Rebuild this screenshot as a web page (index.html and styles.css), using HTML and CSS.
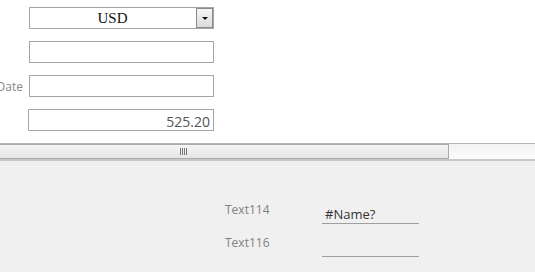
FILE: index.html
```html
<!DOCTYPE html>
<html lang="en">
<head>
    <meta charset="UTF-8">
    <meta name="viewport" content="width=device-width, initial-scale=1.0">
    <title>Invoice Form</title>
    <link rel="stylesheet" href="styles.css">
</head>
<body>
    <div class="form-top">
        <div class="row row-select">
            <label class="lbl"></label>
            <div class="select-box">
                <span class="select-val">USD</span>
                <span class="select-btn"><span class="arrow"></span></span>
            </div>
        </div>
        <div class="row">
            <label class="lbl"></label>
            <input type="text" class="field">
        </div>
        <div class="row">
            <label class="lbl">Date</label>
            <input type="text" class="field">
        </div>
        <div class="row row-total">
            <label class="lbl"></label>
            <input type="text" class="field field-num" value="525.20">
        </div>
    </div>

    <div class="hscroll">
        <div class="thumb"><span class="grip"><i></i><i></i><i></i><i></i></span></div>
        <div class="track"></div>
    </div>

    <div class="form-bottom">
        <div class="out-row">
            <span class="out-lbl">Text114</span>
            <span class="out-val">#Name?</span>
        </div>
        <div class="out-row">
            <span class="out-lbl">Text116</span>
            <span class="out-val"></span>
        </div>
    </div>
</body>
</html>
```

FILE: styles.css
```css
body { margin: 0; font-family: "Open Sans", "DejaVu Sans", sans-serif; background: #f0f0f0; overflow: hidden; }

.form-top { background: #fff; height: 143px; padding-top: 7px; box-sizing: border-box; }
.row { display: flex; align-items: center; height: 22px; margin-bottom: 12px; }
.row-total { margin-top: 4px; }
.lbl { width: 29px; padding-right: 6px; box-sizing: border-box; text-align: right; font-size: 12px; color: #888; white-space: nowrap; direction: rtl; overflow: visible; }
.row-total .lbl { width: 28px; }

.select-box { width: 185px; height: 22px; box-sizing: border-box; border: 1px solid #a5a5a5; display: flex; align-items: center; position: relative; background: #fff; }
.select-val { flex: 1; text-align: center; font-family: "Liberation Serif", serif; font-size: 15px; color: #111; padding-right: 18px; }
.select-btn { position: absolute; right: 0; top: 0; width: 17px; height: 20px; box-sizing: border-box; border: 1px solid #8a8a8a; background: linear-gradient(#f6f6f6, #dcdcdc); display: flex; align-items: center; justify-content: center; }
.arrow { width: 0; height: 0; border-left: 3px solid transparent; border-right: 3px solid transparent; border-top: 3px solid #111; }

.field { width: 185px; height: 22px; box-sizing: border-box; border: 1px solid #a5a5a5; margin: 0; padding: 2px 3px 0; font-family: "Open Sans", sans-serif; font-size: 13px; color: #444; outline: none; }
.field-num { width: 186px; text-align: right; font-size: 14px; color: #555; }

.hscroll { display: flex; height: 18px; background: #fff; border-top: 1px solid #b4b4b4; border-bottom: 2px solid #c8c8c8; box-sizing: border-box; }
.thumb { width: 449px; box-sizing: border-box; border: 1px solid #aaa; border-left: none; background: linear-gradient(#f4f4f4, #e6e6e6); display: flex; align-items: center; justify-content: center; padding-right: 82px; }
.grip { display: flex; gap: 1px; }
.grip i { width: 1px; height: 7px; background: #777; }
.track { flex: 1; background: linear-gradient(#f2f2f2, #fbfbfb); }

.form-bottom { padding-top: 41px; padding-left: 225px; }
.out-row { display: flex; align-items: flex-start; height: 33px; }
.out-lbl { width: 97px; font-size: 12px; color: #808080; line-height: 16px; }
.out-val { width: 97px; height: 19px; border-bottom: 1px solid #a0a0a0; font-size: 13px; color: #333; padding-left: 3px; box-sizing: border-box; line-height: 19px; margin-top: 3px; }
```
